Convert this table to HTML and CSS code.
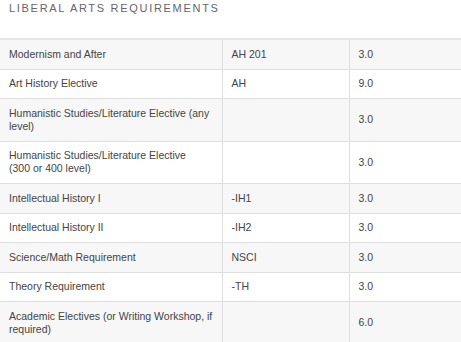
FILE: index.html
```html
<!DOCTYPE html>
<html>
<head>
<meta charset="utf-8">
<link rel="stylesheet" href="styles.css">
</head>
<body>
<h2 class="title">LIBERAL ARTS REQUIREMENTS</h2>
<table class="req">
<colgroup><col class="c1"><col class="c2"><col class="c3"></colgroup>
<tbody>
<tr><td>Modernism and After</td><td>AH 201</td><td>3.0</td></tr>
<tr><td>Art History Elective</td><td>AH</td><td>9.0</td></tr>
<tr><td>Humanistic Studies/Literature Elective (any level)</td><td></td><td>3.0</td></tr>
<tr><td>Humanistic Studies/Literature Elective<br>(300 or 400 level)</td><td></td><td>3.0</td></tr>
<tr><td>Intellectual History I</td><td>-IH1</td><td>3.0</td></tr>
<tr><td>Intellectual History II</td><td>-IH2</td><td>3.0</td></tr>
<tr><td>Science/Math Requirement</td><td>NSCI</td><td>3.0</td></tr>
<tr><td>Theory Requirement</td><td>-TH</td><td>3.0</td></tr>
<tr><td>Academic Electives (or Writing Workshop, if required)</td><td></td><td>6.0</td></tr>
</tbody>
</table>
</body>
</html>
```
FILE: styles.css
```css
html, body {
  margin: 0;
  padding: 0;
  background: #fff;
}
body {
  font-family: "Liberation Sans", Arial, sans-serif;
  color: #333;
}
.title {
  margin: 0;
  padding: 2px 0 0 9px;
  height: 38px;
  box-sizing: border-box;
  font-size: 11px;
  line-height: 13px;
  font-weight: normal;
  letter-spacing: 1.7px;
  color: #666;
}
.req {
  width: 461px;
  border-collapse: collapse;
  table-layout: fixed;
  border-top: 2px solid #e6e6e6;
}
.c1 { width: 222px; }
.c2 { width: 127px; }
.c3 { width: 112px; }
.req td {
  font-size: 10.5px;
  line-height: 13px;
  padding: 7.75px 9px;
  border-bottom: 1px solid #dedede;
  vertical-align: middle;
  color: #444;
}
.req td + td {
  border-left: 1px solid #dedede;
}
.req tr:nth-child(odd) td {
  background: #f7f7f7;
}
```
